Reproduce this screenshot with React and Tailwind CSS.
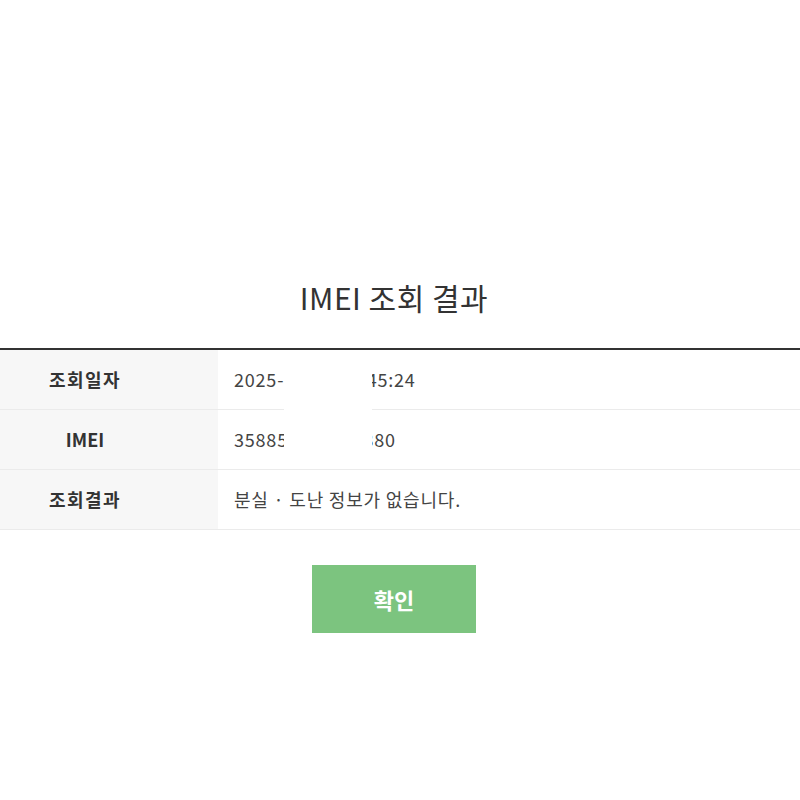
export default function App() {
  const font = { fontFamily: '"Noto Sans CJK KR", "Noto Sans", sans-serif' };
  const rows = [
    { label: "조회일자", value: "2025-01-15 14:45:24", track: "tracking-[1.5px]" },
    { label: "IMEI", value: "358851234567380", track: "tracking-[0px]" },
    { label: "조회결과", value: "분실 · 도난 정보가 없습니다.", track: "tracking-[1.5px]" },
  ];
  return (
    <div className="w-full h-[800px] bg-white overflow-hidden" style={font}>
      <div className="pt-[277px] pr-[12px] flex justify-center">
        <h1 className="text-[30px] leading-[40px] font-normal tracking-[0.5px] text-[#333]">IMEI 조회 결과</h1>
      </div>
      <div className="mt-[31px] relative border-t-2 border-[#333]">
        {rows.map((r) => (
          <div key={r.label} className="flex h-[60px] border-b border-[#ebebeb]">
            <div className={`w-[218px] shrink-0 bg-[#f7f7f7] flex items-center justify-center pr-[48px] text-[18px] font-bold text-[#333] ${r.track}`}>
              {r.label}
            </div>
            <div className="flex-1 flex items-center pl-[16px] text-[18px] tracking-[0.8px] text-[#444] whitespace-nowrap">
              {r.value}
            </div>
          </div>
        ))}
        <div className="absolute left-[284px] top-[1px] w-[88px] h-[117px] bg-white" />
      </div>
      <div className="mt-[35px] pr-[12px] flex justify-center">
        <button className="w-[164px] h-[68px] bg-[#7cc47f] text-white text-[22px] font-bold">확인</button>
      </div>
    </div>
  );
}
